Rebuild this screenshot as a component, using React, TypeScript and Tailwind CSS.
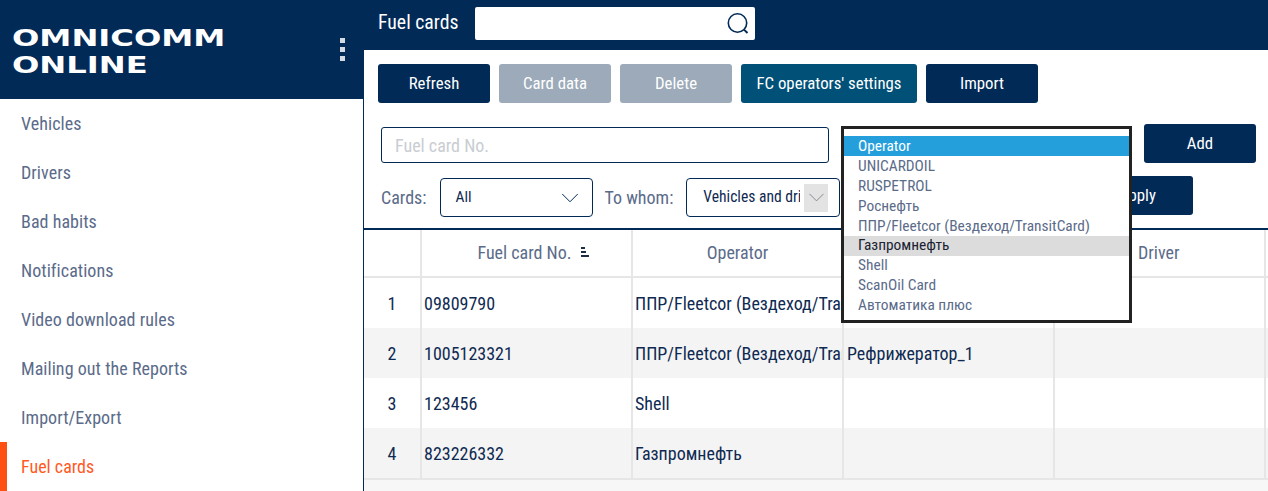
import { ChevronDown } from "lucide-react";

const menu = ["Vehicles", "Drivers", "Bad habits", "Notifications", "Video download rules", "Mailing out the Reports", "Import/Export", "Fuel cards"];
const operators = ["UNICARDOIL", "RUSPETROL", "Роснефть", "ППР/Fleetcor (Вездеход/TransitCard)"];
const rows = [
  { n: 1, card: "09809790", op: "ППР/Fleetcor (Вездеход/TransitCard)", vehicle: "" },
  { n: 2, card: "1005123321", op: "ППР/Fleetcor (Вездеход/TransitCard)", vehicle: "Рефрижератор_1" },
  { n: 3, card: "123456", op: "Shell", vehicle: "" },
  { n: 4, card: "823226332", op: "Газпромнефть", vehicle: "" },
];

const Sidebar = () => (
  <div className="w-[363px] shrink-0 flex flex-col">
    <div className="h-[99px] bg-[#012a57] flex items-center justify-between pl-[12px] pr-[18px]">
      <div className="font-['DejaVu_Sans'] font-bold font-stretch-normal text-white text-[23.5px] leading-[27px] pt-[5px] origin-left scale-x-[1.37]">
        OMNICOMM
        <br />
        ONLINE
      </div>
      <div className="flex flex-col gap-[4px]">
        <span className="size-[5px] bg-[#d5dbe3]" />
        <span className="size-[5px] bg-[#d5dbe3]" />
        <span className="size-[5px] bg-[#d5dbe3]" />
      </div>
    </div>
    <div className="flex flex-col">
      {menu.map((item) => (
        <div
          key={item}
          className={
            item === "Fuel cards"
              ? "h-[49px] flex items-center pl-[14px] border-l-[7px] border-[#ff5014] text-[#ff5a1f] text-[18px]"
              : "h-[49px] flex items-center pl-[21px] text-[#5b6b8a] text-[18px] tracking-[0.05px]"
          }
        >
          {item}
        </div>
      ))}
    </div>
  </div>
);

const Btn = ({ label, cls }: { label: string; cls: string }) => (
  <button className={"h-[39px] rounded-[3px] text-white text-[16.8px] " + cls}>{label}</button>
);

const Dropdown = () => (
  <div className="absolute left-[477px] top-[126px] w-[291px] h-[197px] border-[3px] border-[#222222] bg-white pt-[7px] text-[15.4px] leading-[20px] text-[#5b6b8a] z-10">
    <div className="pl-[14px] h-[20px] bg-[#259fdc] text-white">Operator</div>
    {operators.map((o) => (
      <div key={o} className="pl-[14px] h-[20px]">{o}</div>
    ))}
    <div className="pl-[14px] h-[20px] leading-[18px] bg-[#dcdcdc] text-[#1a2233]">Газпромнефть</div>
    <div className="pl-[14px] h-[20px] leading-[18px]">Shell</div>
    <div className="pl-[14px] h-[20px] leading-[18px]">ScanOil Card</div>
    <div className="pl-[14px] h-[20px] leading-[18px]">Автоматика плюс</div>
  </div>
);

const Cell = ({ children, cls }: { children?: React.ReactNode; cls?: string }) => (
  <div className={"h-full flex items-center overflow-hidden whitespace-nowrap border-r-2 border-[#e6e6e6] " + (cls ?? "")}>{children}</div>
);

const Table = () => (
  <div className="border-t-2 border-[#012a57] flex-1 bg-[#f7f7f7]">
    <div className="grid grid-cols-[58px_211px_211px_211px_211px] h-[48px] border-b-2 border-[#e6e6e6] bg-white text-[#5b6b8a] text-[18px]">
      <Cell />
      <Cell cls="justify-center gap-[9px] pl-[14px] pb-[2px]">
        Fuel card No.
        <svg width="9" height="11" viewBox="0 0 9 11" fill="#1f2c44">
          <rect x="0" y="0" width="4" height="2" />
          <rect x="0" y="4" width="5" height="2" />
          <rect x="0" y="8" width="8" height="2" />
        </svg>
      </Cell>
      <Cell cls="justify-center pb-[2px]">Operator</Cell>
      <Cell />
      <Cell cls="pl-[83px] pb-[2px]">Driver</Cell>
    </div>
    {rows.map((r) => (
      <div
        key={r.n}
        className={
          "grid grid-cols-[58px_211px_211px_211px_211px] h-[50px] text-[#0f2a52] text-[18px] " +
          (r.n % 2 === 0 ? "bg-[#f4f4f4]" : "bg-white")
        }
      >
        <Cell cls="justify-center">{r.n}</Cell>
        <Cell cls="pl-[2px]">{r.card}</Cell>
        <Cell cls="pl-[2px]">{r.op}</Cell>
        <Cell cls="pl-[3px]">{r.vehicle}</Cell>
        <Cell />
      </div>
    ))}
    <div className="border-t-2 border-[#e6e6e6]" />
  </div>
);

export default function App() {
  return (
    <div className="w-[1268px] h-[491px] flex overflow-hidden bg-white font-['Roboto',sans-serif] font-stretch-condensed">
      <Sidebar />
      <div className="flex-1 relative flex flex-col border-l border-[#012a57]">
        <div className="h-[50px] bg-[#012a57] flex items-start pt-[7px] pl-[14px] text-white">
          <span className="mr-[16px] text-[19.8px] leading-[32px]">Fuel cards</span>
          <div className="w-[280px] h-[33px] bg-white rounded-[2px] flex items-center justify-end pr-[5px]">
            <svg width="24" height="24" viewBox="0 0 24 24" fill="none" stroke="#012a57" strokeWidth="1.6">
              <circle cx="11.5" cy="11" r="9.2" />
              <path d="M18 17.6 L21.5 21" strokeWidth="2" />
            </svg>
          </div>
        </div>
        <div className="flex gap-[9px] pl-[14px] pt-[14px]">
          <Btn label="Refresh" cls="w-[112px] bg-[#012a57]" />
          <Btn label="Card data" cls="w-[112px] bg-[#9caab9]" />
          <Btn label="Delete" cls="w-[112px] bg-[#9caab9]" />
          <Btn label="FC operators' settings" cls="w-[176px] bg-[#015078]" />
          <Btn label="Import" cls="w-[112px] bg-[#012a57]" />
        </div>
        <div className="flex items-start pl-[17px] pt-[21px] h-[60px]">
          <div className="w-[448px] h-[36px] mt-[3px] border border-[#012a57] rounded-[3px] pl-[13px] flex items-center text-[18px] text-[#c9cdd2]">
            Fuel card No.
          </div>
          <Btn label="Add" cls="w-[112px] ml-[315px] bg-[#012a57]" />
        </div>
        <div className="flex items-start pl-[17px] pt-[13px] h-[65px] text-[18px] text-[#5b6b8a]">
          <span className="h-[39px] mt-[2px] flex items-center">Cards:</span>
          <div className="ml-[14px] w-[153px] h-[39px] mt-[2px] border border-[#012a57] rounded-[4px] flex items-center justify-between pl-[14px] pr-[7px] text-[#0f2a52] text-[15.5px]">
            <span className="pt-[1px]">All</span>
            <ChevronDown className="size-[30px] text-[#012a57]" strokeWidth={0.8} />
          </div>
          <span className="h-[39px] mt-[2px] ml-[11px] flex items-center">To whom:</span>
          <div className="ml-[13px] w-[154px] h-[39px] mt-[2px] border border-[#012a57] rounded-[4px] flex items-center pl-[16px] text-[#0f2a52] text-[15.6px]">
            <span className="w-[97px] pt-[1px] overflow-hidden whitespace-nowrap">Vehicles and drivers</span>
            <span className="ml-[4px] w-[24px] h-[28px] bg-[#e3e3e3] flex items-center justify-center">
              <ChevronDown className="size-[27px] shrink-0 text-[#7b8088]" strokeWidth={0.8} />
            </span>
          </div>
          <Btn label="Apply" cls="w-[112px] ml-[241px] bg-[#012a57]" />
        </div>
        <Table />
        <Dropdown />
      </div>
    </div>
  );
}
